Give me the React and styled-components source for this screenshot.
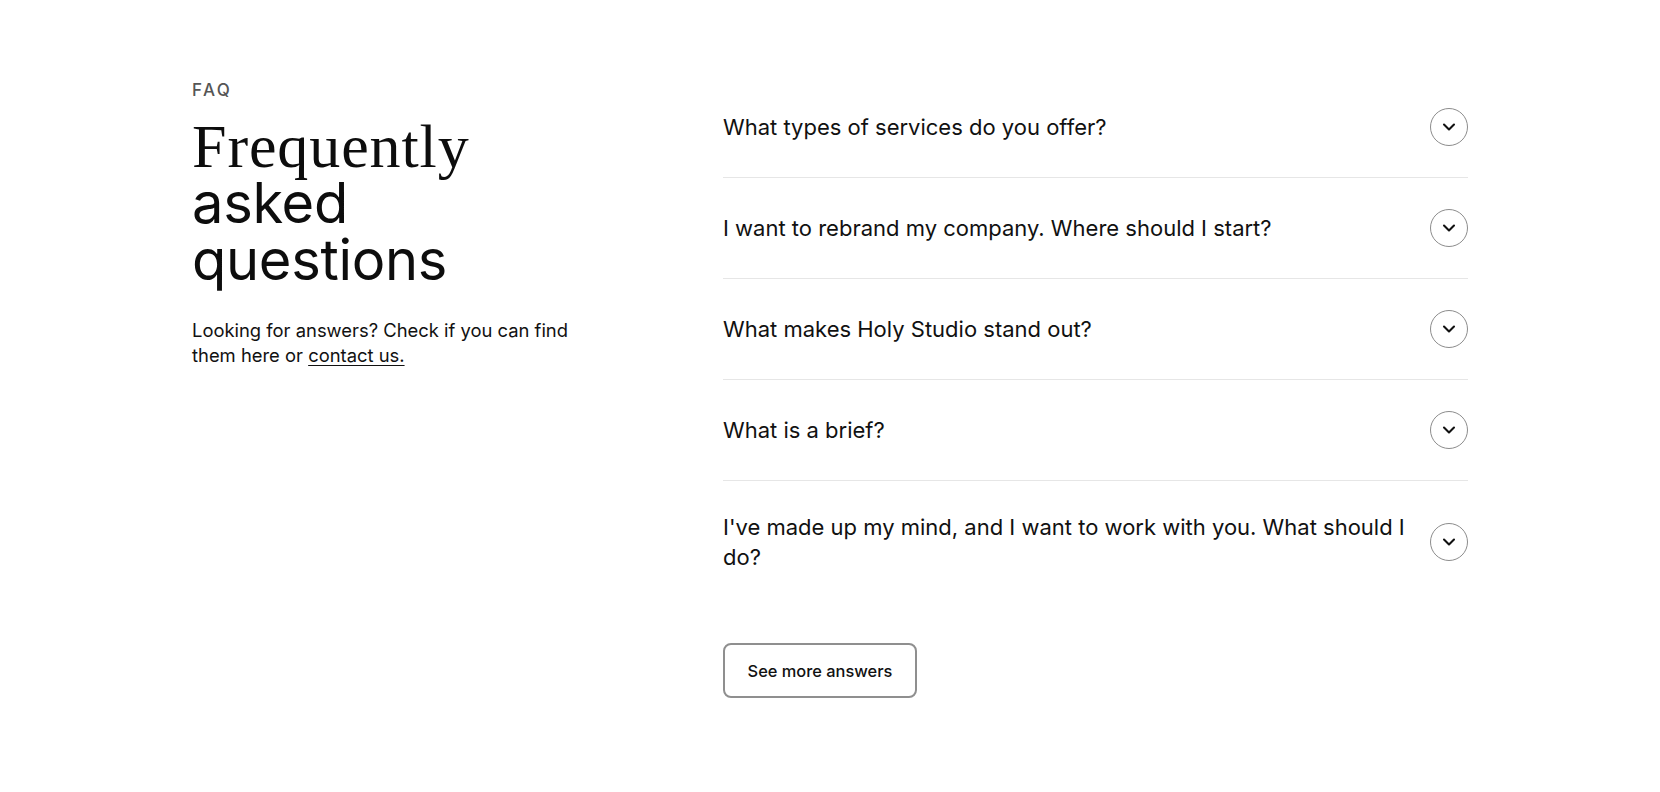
import React from "react";
import styled, { createGlobalStyle } from "styled-components";
import { ChevronDown } from "lucide-react";

const GlobalStyle = createGlobalStyle`
    html, body {
        margin: 0;
        padding: 0;
        background: #ffffff;
    }
    body {
        font-family: Inter, "Noto Sans", sans-serif;
        color: #111111;
        -webkit-font-smoothing: antialiased;
    }
`

const StyledSection = styled.section`
    display: grid;
    grid-template-columns: 1fr 745px;
    max-width: 1276px;
    margin: 0 auto;
    padding: 77px 0 80px;
`
const StyledIntro = styled.div`
    padding-top: 3px;
`
const StyledEyebrow = styled.p`
    margin: 0 0 18px;
    font-size: 17px;
    line-height: 20px;
    font-weight: 500;
    letter-spacing: 2.4px;
    color: #555555;
`
const StyledHeading = styled.h2`
    margin: 0;
    font-weight: 400;
`
const StyledHeadingLine = styled.span`
    display: block;
    line-height: 57px;
    font-family: ${(props) => props.$serif ? '"Liberation Serif", "Times New Roman", serif' : 'Inter, "Noto Sans", sans-serif'};
    font-size: ${(props) => props.$serif ? '62px' : '56px'};
    letter-spacing: ${(props) => props.$serif ? '0.9px' : '-0.3px'};
    color: #0d0d0d;
`
const StyledLead = styled.p`
    margin: 29px 0 0;
    max-width: 385px;
    font-size: 18.4px;
    line-height: 25px;
    color: #111111;

    a {
        color: inherit;
        text-decoration: underline;
        text-underline-offset: 3px;
        text-decoration-thickness: 1px;
    }
`
const StyledList = styled.div`
    display: flex;
    flex-direction: column;
`
const StyledItem = styled.div`
    display: flex;
    align-items: center;
    justify-content: space-between;
    gap: 14px;
    padding: 31px 0;
    border-bottom: ${(props) => props.$last ? 'none' : '1px solid #e6e6e6'};
`
const StyledQuestion = styled.h3`
    flex: 1;
    margin: 0;
    font-size: 22px;
    line-height: 30px;
    font-weight: 400;
    color: #111111;
`
const StyledToggle = styled.button`
    flex: none;
    display: flex;
    align-items: center;
    justify-content: center;
    width: 38px;
    height: 38px;
    padding: 0;
    border: 1px solid #8c8c8c;
    border-radius: 50%;
    background: #ffffff;
    color: #111111;
    cursor: pointer;
`
const StyledMore = styled.button`
    align-self: flex-start;
    margin-top: 40px;
    width: 194px;
    height: 55px;
    border: 2px solid #8f8f8f;
    border-radius: 8px;
    background: #ffffff;
    font-family: Inter, "Noto Sans", sans-serif;
    font-size: 16.4px;
    font-weight: 500;
    color: #111111;
    cursor: pointer;
`

const questions = [
    "What types of services do you offer?",
    "I want to rebrand my company. Where should I start?",
    "What makes Holy Studio stand out?",
    "What is a brief?",
    "I've made up my mind, and I want to work with you. What should I do?",
];

export default function App() {
    return (
        <>
            <GlobalStyle />
            <StyledSection>
                <StyledIntro>
                    <StyledEyebrow>FAQ</StyledEyebrow>
                    <StyledHeading>
                        <StyledHeadingLine $serif>Frequently</StyledHeadingLine>
                        <StyledHeadingLine>asked</StyledHeadingLine>
                        <StyledHeadingLine>questions</StyledHeadingLine>
                    </StyledHeading>
                    <StyledLead>
                        Looking for answers? Check if you can find them here or <a href="#contact">contact us.</a>
                    </StyledLead>
                </StyledIntro>
                <StyledList>
                    {questions.map((q, i) => (
                        <StyledItem key={q} $last={i === questions.length - 1}>
                            <StyledQuestion>{q}</StyledQuestion>
                            <StyledToggle aria-label="Open answer">
                                <ChevronDown size={20} strokeWidth={2.5} />
                            </StyledToggle>
                        </StyledItem>
                    ))}
                    <StyledMore>See more answers</StyledMore>
                </StyledList>
            </StyledSection>
        </>
    );
}
